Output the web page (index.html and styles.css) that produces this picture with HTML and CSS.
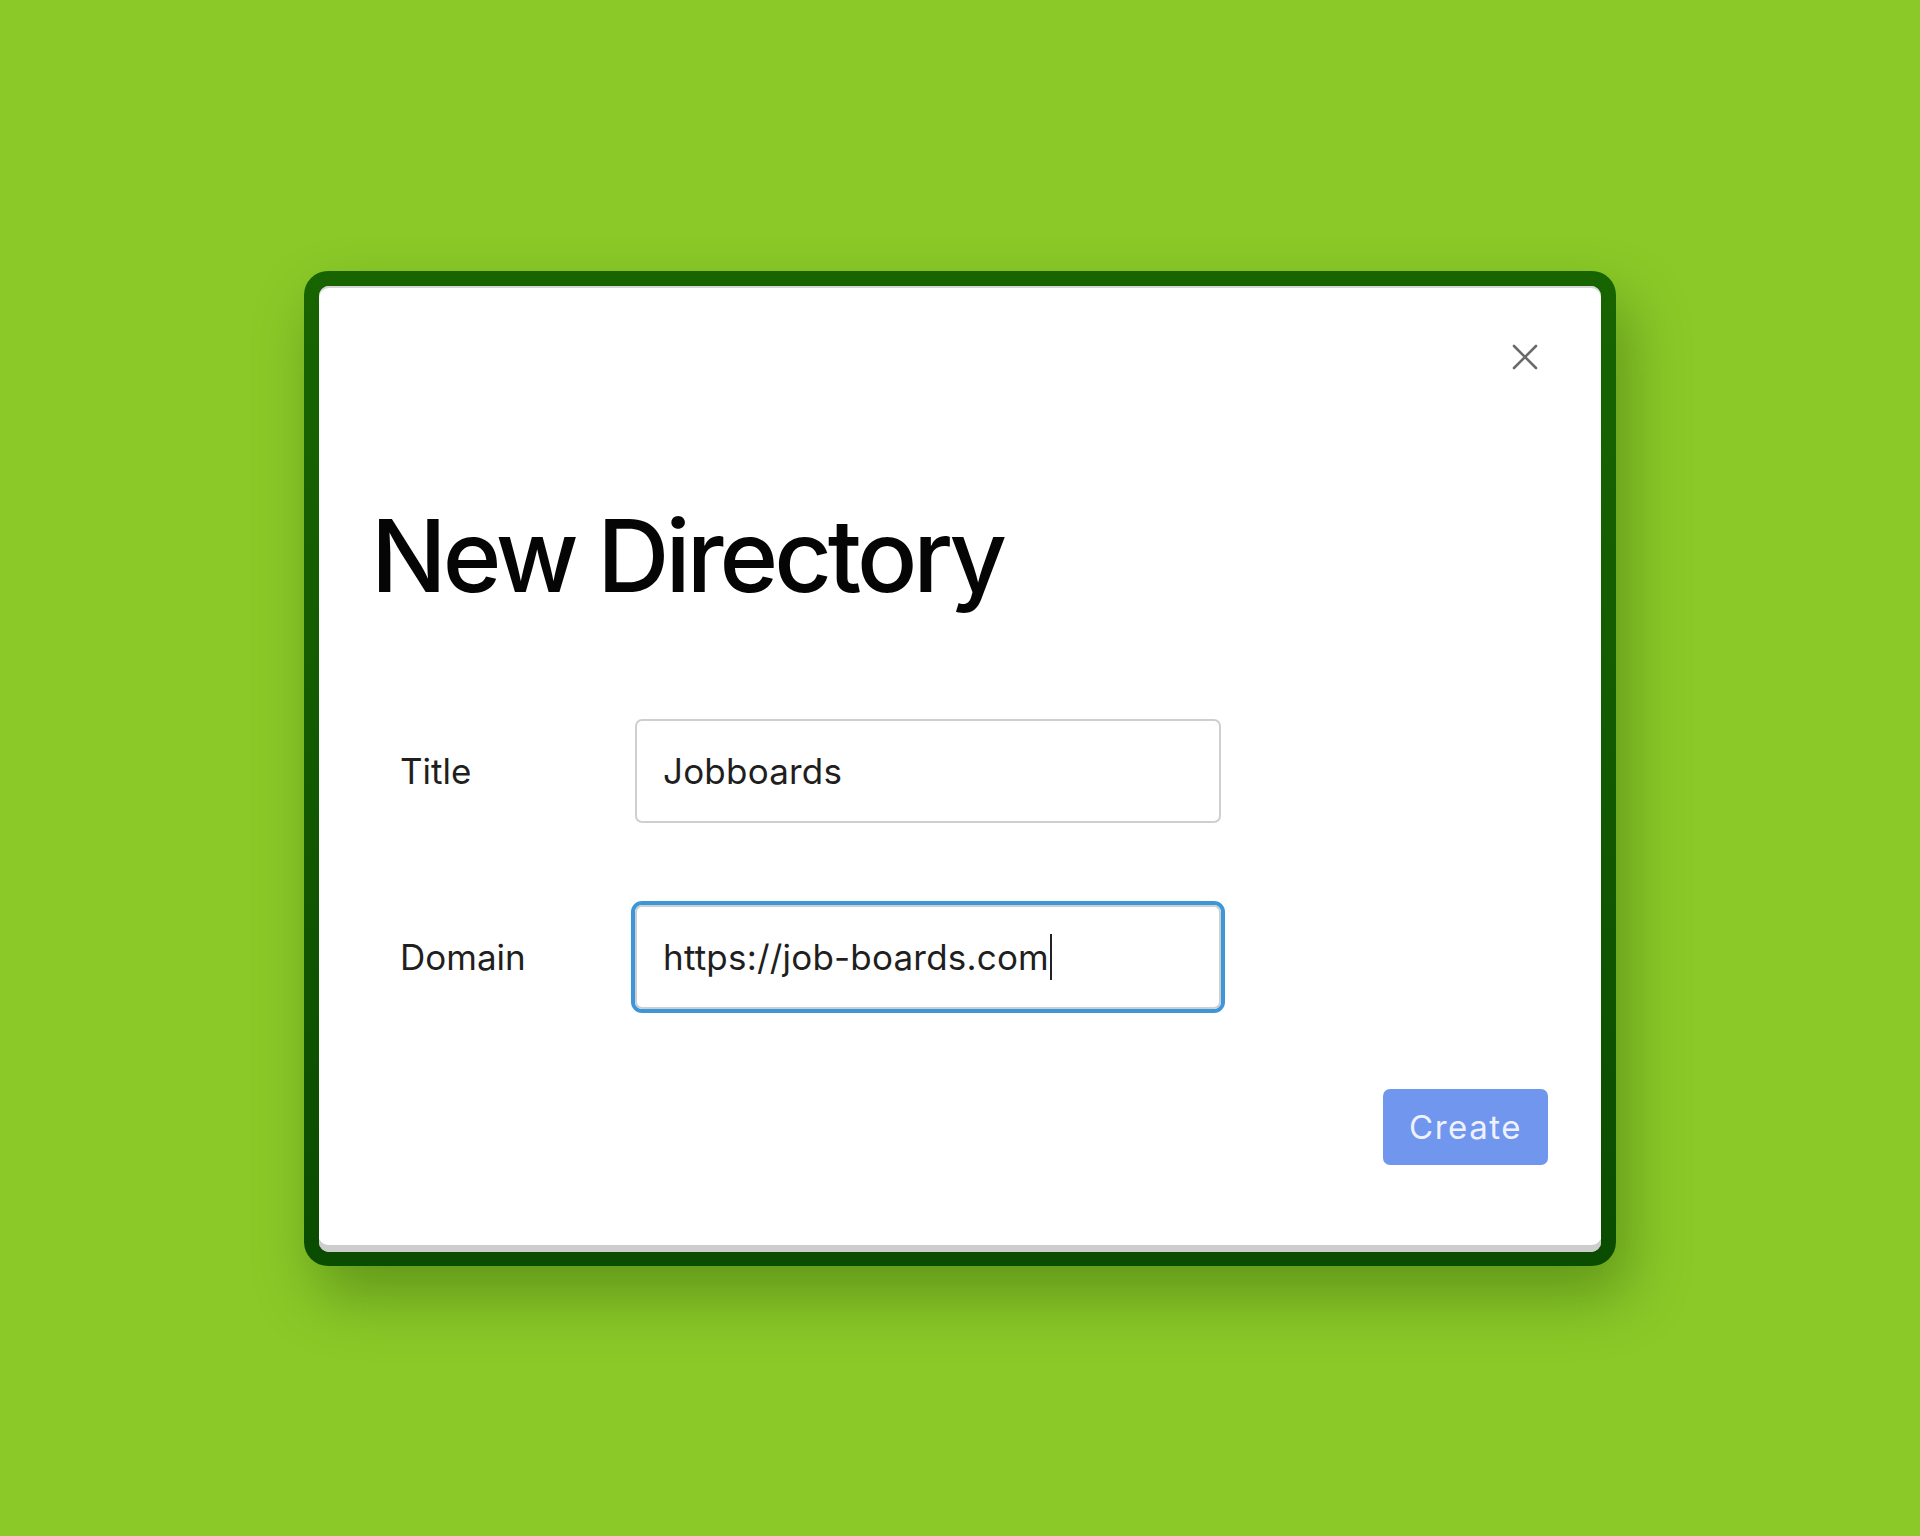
FILE: index.html
```html
<!DOCTYPE html>
<html lang="en">
<head>
<meta charset="utf-8">
<title>New Directory</title>
<link rel="stylesheet" href="styles.css">
</head>
<body>
<div class="stage">
  <div class="frame">
    <div class="card">
      <div class="card-head">
        <button class="close" aria-label="Close">
          <svg width="28" height="28" viewBox="0 0 28 28"><path d="M3 3 L25 25 M25 3 L3 25" stroke="#6a6a6a" stroke-width="2.6" stroke-linecap="round" fill="none"/></svg>
        </button>
      </div>
      <h1 class="heading">New Directory</h1>
      <div class="form">
        <div class="label">Title</div>
        <div class="field"><span class="value">Jobboards</span></div>
        <div class="label">Domain</div>
        <div class="field focused"><span class="value">https://job-boards.com</span><span class="caret"></span></div>
      </div>
      <div class="actions">
        <button class="create">Create</button>
      </div>
    </div>
  </div>
</div>
</body>
</html>
```
FILE: styles.css
```css
html, body {
  margin: 0;
  padding: 0;
}
body {
  background: #8bc928;
  font-family: Inter, "Noto Sans", sans-serif;
  color: #1e1e1e;
}
.stage {
  height: 1536px;
  display: flex;
  align-items: center;
  justify-content: center;
}
.frame {
  width: 1312px;
  height: 995px;
  box-sizing: border-box;
  padding: 15px 15px 14px 15px;
  border-radius: 24px;
  background: linear-gradient(180deg, #186400 0%, #125a00 50%, #0a4c00 100%);
  box-shadow: 12px 30px 60px rgba(20, 60, 0, 0.35);
  display: flex;
}
.card {
  flex: 1;
  background: #fff;
  border-radius: 10px;
  box-shadow: inset 0 -8px 0 -1px #cdcdcd, inset 0 2px 0 #d6d6d6;
  display: flex;
  flex-direction: column;
  padding: 0 53px 0 54px;
}
.card-head {
  display: flex;
  justify-content: flex-end;
  padding-top: 57px;
  margin-right: 9px;
}
.close {
  width: 28px;
  height: 28px;
  padding: 0;
  border: 0;
  background: none;
  display: flex;
}
.heading {
  margin: 135px 0 0 -2px;
  font-size: 100px;
  line-height: 100px;
  font-weight: 500;
  letter-spacing: -0.04em;
  color: #050505;
}
.form {
  margin: 113px 0 0 27px;
  display: grid;
  grid-template-columns: 235px 586px;
  row-gap: 82px;
  align-items: center;
}
.label {
  font-size: 35px;
  color: #1f1f1f;
}
.field {
  height: 104px;
  box-sizing: border-box;
  border: 2px solid #cfcfcf;
  border-radius: 7px;
  padding: 0 0 0 26px;
  display: flex;
  align-items: center;
  font-size: 35px;
  letter-spacing: 0.2px;
  color: #1f1f1f;
}
.field.focused {
  box-shadow: 0 0 0 4px #3c96da;
}
.caret {
  width: 2px;
  height: 46px;
  background: #222;
  margin-left: 1px;
}
.actions {
  display: flex;
  justify-content: flex-end;
  margin-top: 80px;
}
.create {
  width: 165px;
  height: 76px;
  border: 0;
  border-radius: 7px;
  background: #7096ee;
  color: #eef2ff;
  font-family: Inter, "Noto Sans", sans-serif;
  font-size: 33px;
  letter-spacing: 1.5px;
  padding: 0;
}
```
